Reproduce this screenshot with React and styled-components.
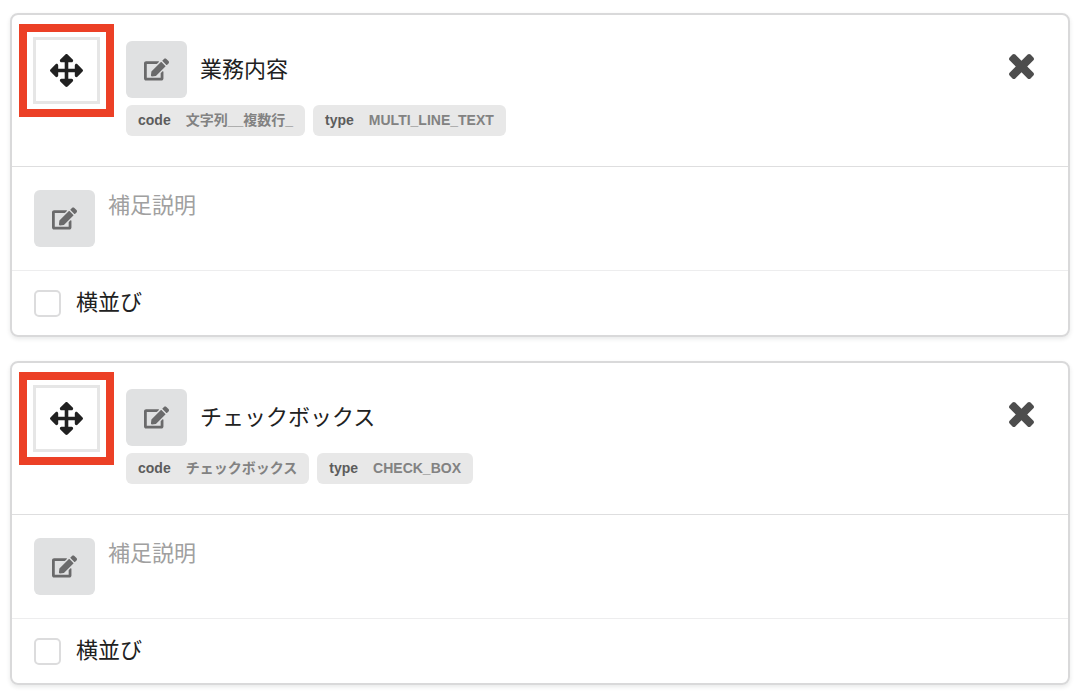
import React, { useState } from "react";
import styled, { createGlobalStyle } from "styled-components";
import { FaArrowsAlt, FaEdit } from "react-icons/fa";

const fields = [
  {
    id: "multi",
    label: "業務内容",
    code: "文字列__複数行_",
    type: "MULTI_LINE_TEXT",
  },
  {
    id: "check",
    label: "チェックボックス",
    code: "チェックボックス",
    type: "CHECK_BOX",
  },
];

function CloseIcon() {
  return (
    <svg viewBox="110 366 1188 1188" width="25" height="25" aria-hidden="true">
      <path
        fill="currentColor"
        d="M1298 1322q0 40-28 68l-136 136q-28 28-68 28t-68-28l-294-294-294 294q-28 28-68 28t-68-28l-136-136q-28-28-28-68t28-68l294-294-294-294q-28-28-28-68t28-68l136-136q28-28 68-28t68 28l294 294 294-294q28-28 68-28t68 28l136 136q28 28 28 68t-28 68l-294 294 294 294q28 28 28 68z"
      />
    </svg>
  );
}

function Tag({ name, value }) {
  return (
    <TagBox>
      <span>{name}</span>
      <TagValue>{value}</TagValue>
    </TagBox>
  );
}

function FieldCard({ field }) {
  const [inline, setInline] = useState(false);

  return (
    <Card>
      <Header>
        <Highlight>
          <MoveButton type="button" aria-label="move">
            <FaArrowsAlt size={33} />
          </MoveButton>
        </Highlight>
        <Main>
          <TitleRow>
            <EditButton type="button" aria-label="edit label">
              <FaEdit size={25} />
            </EditButton>
            <Title>{field.label}</Title>
          </TitleRow>
          <Tags>
            <Tag name="code" value={field.code} />
            <Tag name="type" value={field.type} />
          </Tags>
        </Main>
        <CloseButton type="button" aria-label="remove">
          <CloseIcon />
        </CloseButton>
      </Header>
      <Description>
        <EditButton type="button" aria-label="edit description">
          <FaEdit size={25} />
        </EditButton>
        <Placeholder>補足説明</Placeholder>
      </Description>
      <Options>
        <Checkbox
          id={`inline-${field.id}`}
          type="checkbox"
          checked={inline}
          onChange={(e) => setInline(e.target.checked)}
        />
        <label htmlFor={`inline-${field.id}`}>横並び</label>
      </Options>
    </Card>
  );
}

function App() {
  return (
    <>
      <GlobalStyle />
      <List>
        {fields.map((field) => (
          <FieldCard key={field.id} field={field} />
        ))}
      </List>
    </>
  );
}

export default App;

const GlobalStyle = createGlobalStyle`
  * {
    box-sizing: border-box;
  }
  body {
    margin: 0;
    background: #fff;
    color: #212121;
    font-family: "Liberation Sans", "Noto Sans CJK JP", sans-serif;
    font-size: 22px;
    line-height: 32px;
  }
  button {
    padding: 0;
    font: inherit;
    cursor: pointer;
  }
`;

const List = styled.main`
  display: flex;
  flex-direction: column;
  gap: 24px;
  padding: 13px 10px;
`;

const Card = styled.section`
  border: 2px solid #d9d9da;
  border-radius: 8px;
  box-shadow: 0 2px 4px rgba(34, 36, 38, 0.1);
`;

const Header = styled.header`
  display: flex;
  align-items: flex-start;
  gap: 12px;
  padding: 9px 34px 30px 7px;
`;

const Highlight = styled.div`
  padding: 5px 6px;
  border: 8px solid #ec4026;
`;

const MoveButton = styled.button`
  display: flex;
  align-items: center;
  justify-content: center;
  width: 67px;
  height: 67px;
  border: 3px solid #e6e6e6;
  background: #fff;
  color: #212121;
`;

const Main = styled.div`
  flex: 1;
  padding-top: 17px;
`;

const TitleRow = styled.div`
  display: flex;
  align-items: center;
  gap: 13px;
`;

const Title = styled.h2`
  margin: 0;
  font-size: 22px;
  font-weight: 400;
`;

const EditButton = styled.button`
  display: flex;
  align-items: center;
  justify-content: center;
  width: 61px;
  height: 57px;
  border: 0;
  border-radius: 6px;
  background: #e0e1e2;
  color: #6a6a6b;
`;

const Tags = styled.div`
  display: flex;
  gap: 8px;
  margin-top: 7px;
`;

const TagBox = styled.div`
  display: flex;
  gap: 15px;
  padding: 0 12px;
  border-radius: 6px;
  background: #e8e8e8;
  color: #5c5c5c;
  font-size: 14px;
  font-weight: 700;
  line-height: 31px;
`;

const TagValue = styled.span`
  color: #828282;
`;

const CloseButton = styled.button`
  display: flex;
  margin-top: 30px;
  border: 0;
  background: none;
  color: #4d4d4d;
`;

const Description = styled.div`
  display: flex;
  align-items: flex-start;
  gap: 13px;
  padding: 23px 22px;
  border-top: 1px solid #dededf;
`;

const Placeholder = styled.p`
  margin: 0;
  color: #a0a0a0;
`;

const Options = styled.div`
  display: flex;
  align-items: center;
  gap: 15px;
  padding: 16px 22px;
  border-top: 1px solid #ededee;
`;

const Checkbox = styled.input`
  appearance: none;
  width: 27px;
  height: 27px;
  margin: 0;
  border: 2px solid #dcdcdd;
  border-radius: 5px;
  background: #fff;

  &:checked {
    background: #4d4d4d;
  }
`;
